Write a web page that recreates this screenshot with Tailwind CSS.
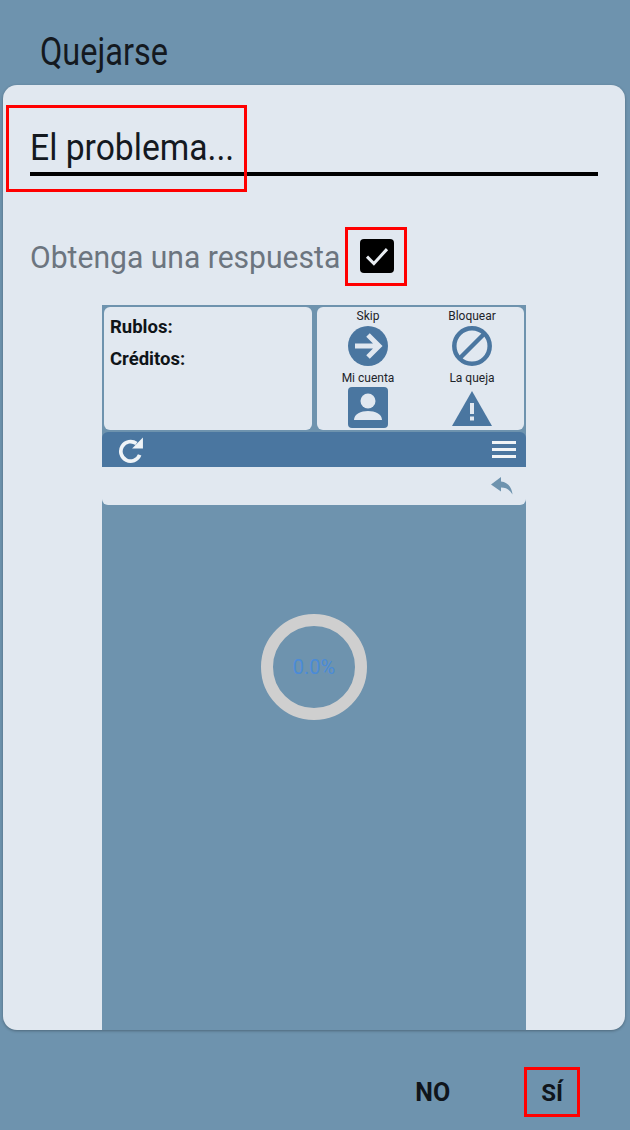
<!DOCTYPE html>
<html lang="es">
<head>
  <meta charset="UTF-8" />
  <meta name="viewport" content="width=device-width, initial-scale=1.0" />
  <title>Quejarse</title>
  <script src="https://cdn.jsdelivr.net/npm/@tailwindcss/browser@4"></script>
</head>
<body class="relative w-[630px] h-[1130px] overflow-hidden bg-[#6e93ae] font-['Roboto',sans-serif] text-[#14191f]">
  <!-- title -->
  <header class="h-[85px] pl-[40px] pt-[31px]">
    <h1 class="text-[38px] leading-[42px] origin-left scale-x-[0.855] whitespace-nowrap">Quejarse</h1>
  </header>

  <!-- dialog -->
  <main class="mx-[3px] w-[622px] h-[945px] bg-[#e1e8f0] rounded-[14px] overflow-hidden shadow-[0_1px_3px_rgba(0,0,0,0.3)]">
    <div class="mx-[27px] h-[91px] pt-[42px] border-b-[4px] border-black">
      <p class="text-[36px] leading-[42px] origin-left scale-x-[0.935] whitespace-nowrap">El problema...</p>
    </div>

    <div class="flex items-center h-[34px] mt-[63px] ml-[27px]">
      <span class="w-[330px] pt-[2px] text-[32px] leading-[34px] text-[#6c757f] origin-left scale-x-[0.94] whitespace-nowrap">Obtenga una respuesta</span>
      <span class="flex items-center justify-center w-[34px] h-[34px] bg-black rounded-[4px]">
        <svg viewBox="0 0 24 24" class="w-[30px] h-[30px]" fill="none" stroke="#e8edf2" stroke-width="2.4"><path d="M4 12.5l5.5 5.5L20 6.5" /></svg>
      </span>
    </div>

    <!-- screenshot inside the dialog -->
    <section class="ml-[99px] mt-[32px] w-[424px] h-[725px] bg-[#6e93ae]">
      <div class="flex gap-[5px] h-[127px] px-[2px] pt-[2px]">
        <div class="w-[208px] h-[123px] bg-[#e1e8f0] rounded-[6px] pl-[6px] pt-[9px] text-[#0f1418] text-[18.500px] leading-[22px] font-bold">
          <p>Rublos:</p>
          <p class="mt-[10px]">Créditos:</p>
        </div>
        <div class="grid grid-cols-[102px_106px] w-[207px] h-[123px] bg-[#e1e8f0] rounded-[6px] pt-[2px] text-[12px] leading-[14px] text-[#1d2329]">
          <div class="flex flex-col items-center h-[60px]">
            <span>Skip</span>
            <svg viewBox="0 0 40 40" class="w-[40px] h-[40px] mt-[3px]"><circle cx="20" cy="20" r="20" fill="#4a76a0" /><path d="M7 20h23M20 9l11 11-11 11" fill="none" stroke="#e1e8f0" stroke-width="5" /></svg>
          </div>
          <div class="flex flex-col items-center h-[60px]">
            <span>Bloquear</span>
            <svg viewBox="0 0 40 40" class="w-[40px] h-[40px] mt-[3px]" fill="none" stroke="#4a76a0" stroke-width="4.5"><circle cx="20" cy="20" r="17.7" /><path d="M7.5 32.5l25-25" /></svg>
          </div>
          <div class="flex flex-col items-center">
            <span>Mi cuenta</span>
            <svg viewBox="0 0 40 41" class="w-[40px] h-[41px] mt-[2px]"><rect width="40" height="41" rx="4" fill="#4a76a0" /><circle cx="20" cy="14" r="7.5" fill="#e1e8f0" /><path d="M6 33c0-6 7-9 14-9s14 3 14 9z" fill="#e1e8f0" /></svg>
          </div>
          <div class="flex flex-col items-center">
            <span>La queja</span>
            <svg viewBox="0 0 40 35" class="w-[40px] h-[35px] mt-[6px]"><path d="M20 0l20 35H0z" fill="#4a76a0" /><path d="M18 12h4v11h-4zM18 25.500h4v4h-4z" fill="#e1e8f0" /></svg>
          </div>
        </div>
      </div>

      <div class="flex items-center justify-between h-[35px] pl-[16px] pr-[10px] bg-[#4a76a0] rounded-t-[6px]">
        <svg viewBox="0 0 24 24" class="w-[26px] h-[26px]" fill="none" stroke="#f0f4f7" stroke-width="3.4"><path d="M20 16.500A9 9 0 1 1 17 6" /><path d="M13 10.500h10v-10z" fill="#f0f4f7" stroke="none" /></svg>
        <div class="flex flex-col gap-[4px] w-[24px]">
          <span class="h-[3px] bg-[#f0f4f7]"></span>
          <span class="h-[3px] bg-[#f0f4f7]"></span>
          <span class="h-[3px] bg-[#f0f4f7]"></span>
        </div>
      </div>

      <div class="flex items-center justify-end h-[38px] pr-[13px] bg-[#e1e8f0] rounded-b-[6px]">
        <svg viewBox="0 0 22 18" class="w-[22px] h-[18px]"><path d="M10 0L0 7.500 10 14.500V10.500c5 0 8.500 2 11.500 7C21 11 17 5 10 4.500z" fill="#6e93ae" /></svg>
      </div>

      <div class="flex justify-center pt-[109px]">
        <div class="flex items-center justify-center w-[106px] h-[106px] rounded-full border-[12px] border-[#cfcfcf] text-[20px] text-[#4a8bd8]">0.0%</div>
      </div>
    </section>
  </main>

  <!-- actions -->
  <footer class="flex justify-end items-center h-[100px] pt-[26px] pr-[67px] gap-[91px] text-[25px] font-bold text-[#10151b]">
    <button>NO</button>
    <button class="text-[24px]">SÍ</button>
  </footer>

  <!-- red annotation boxes -->
  <div class="absolute left-[6px] top-[105px] w-[241px] h-[87px] border-[3px] border-[#ff0000]"></div>
  <div class="absolute left-[345px] top-[227px] w-[62px] h-[59px] border-[3px] border-[#ff0000]"></div>
  <div class="absolute left-[524px] top-[1067px] w-[56px] h-[50px] border-[3px] border-[#ff0000]"></div>
</body>
</html>
